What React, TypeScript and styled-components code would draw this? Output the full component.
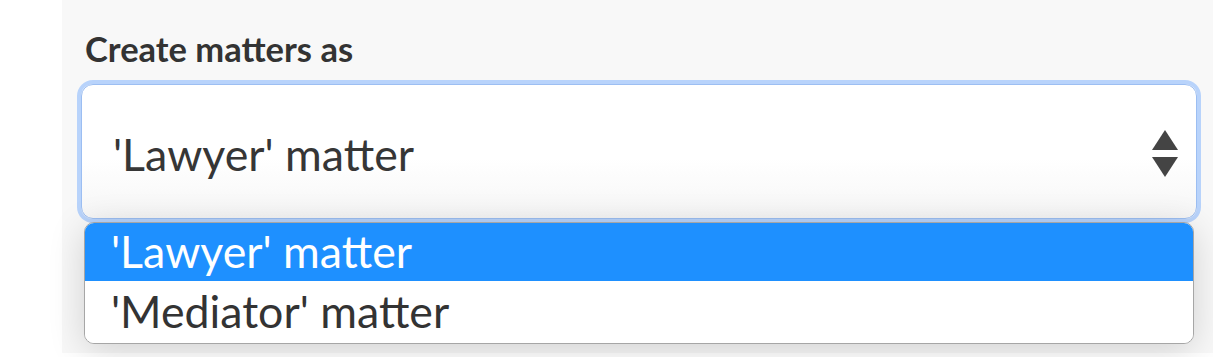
import styled, { createGlobalStyle } from 'styled-components';

const GlobalStyle = createGlobalStyle`
  html, body {
    margin: 0;
    padding: 0;
    background: #ffffff;
  }
  body {
    font-family: Lato, "Noto Sans", sans-serif;
    color: #333333;
  }
`;

const Page = styled.div`
  width: 1213px;
  height: 357px;
  overflow: hidden;
  background: #ffffff;
`;

const Panel = styled.section`
  margin-left: 62px;
  height: 353px;
  background: #f8f8f8;
  padding: 26px 13px 0 16px;
  box-sizing: border-box;
`;

const Label = styled.label`
  display: block;
  margin-left: 7px;
  font-size: 34.5px;
  line-height: 46px;
  font-weight: 700;
  color: #333333;
`;

const Field = styled.div`
  position: relative;
  margin-top: 12px;
`;

const SelectBox = styled.div`
  display: flex;
  align-items: center;
  justify-content: space-between;
  height: 135px;
  box-sizing: border-box;
  padding: 4px 17px 0 31px;
  border: 1px solid #9cbef2;
  border-radius: 12px;
  box-shadow: 0 0 0 4px #b8d3fb;
  background: linear-gradient(#ffffff 55%, #f6f6f6);
  margin: 3px 3px 0 3px;
  font-size: 44.7px;
  color: #363636;
`;

const Arrows = styled.svg`
  width: 28px;
  height: 48px;
  flex: none;
`;

const Menu = styled.ul`
  position: absolute;
  top: 138px;
  left: 6px;
  right: 6px;
  margin: 0;
  padding: 0;
  list-style: none;
  background: #ffffff;
  border: 1.5px solid #a6a6a6;
  border-radius: 10px;
  overflow: hidden;
  box-shadow: 0 6px 36px rgba(0, 0, 0, 0.16);
`;

const Option = styled.li<{ $active?: boolean }>`
  height: ${({ $active }) => ($active ? '58px' : '62px')};
  line-height: ${({ $active }) => ($active ? '56px' : '60px')};
  padding-left: 26px;
  font-size: 44.7px;
  background: ${({ $active }) => ($active ? '#1e90ff' : '#ffffff')};
  color: ${({ $active }) => ($active ? '#ffffff' : '#333333')};
  white-space: nowrap;
`;

export default function App(): JSX.Element {
  return (
    <Page>
      <GlobalStyle />
      <Panel>
        <Label>Create matters as</Label>
        <Field>
          <SelectBox>
            <span>'Lawyer' matter</span>
            <Arrows viewBox="0 0 28 48">
              <polygon points="14,0 27,20 1,20" fill="#444444" />
              <polygon points="1,27 27,27 14,47" fill="#444444" />
            </Arrows>
          </SelectBox>
          <Menu>
            <Option $active>'Lawyer' matter</Option>
            <Option>'Mediator' matter</Option>
          </Menu>
        </Field>
      </Panel>
    </Page>
  );
}
